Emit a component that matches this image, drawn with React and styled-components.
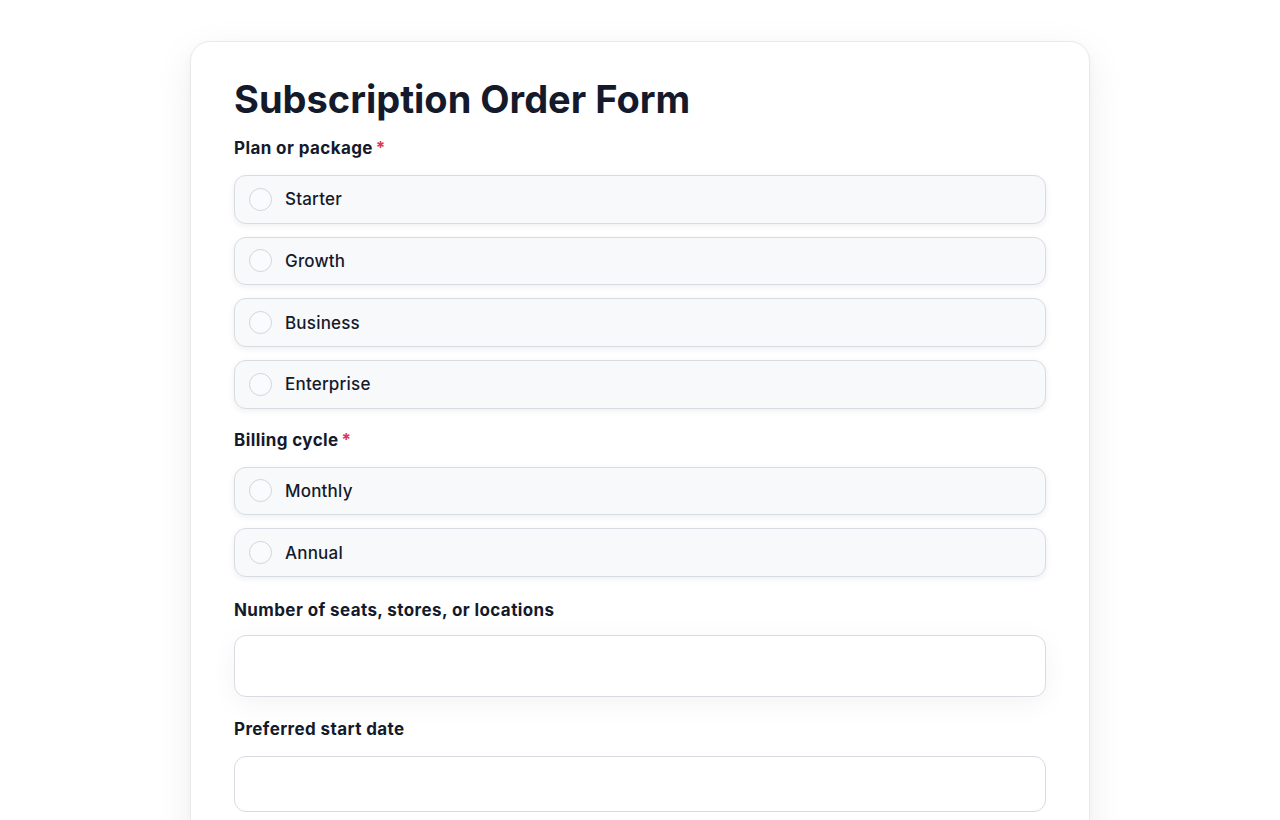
import React from "react";
import styled, { createGlobalStyle } from "styled-components";

const Global = createGlobalStyle`
  * { box-sizing: border-box; }
  html, body { margin: 0; padding: 0; background: #ffffff; }
  body { font-family: Inter, "Noto Sans", "Liberation Sans", sans-serif; color: #141a2b; }
`;

const Page = styled.div`
  display: flex;
  justify-content: center;
  padding-top: 41px;
  min-height: 820px;
`;

const Card = styled.div`
  width: 900px;
  background: #fff;
  border: 1px solid #e8e9ed;
  border-radius: 20px;
  box-shadow: 0 12px 40px rgba(15, 23, 42, 0.07), 0 2px 6px rgba(15, 23, 42, 0.03);
  padding: 35px 43px 60px;
  display: flex;
  flex-direction: column;
`;

const Title = styled.h1`
  margin: 0 0 14px;
  font-size: 38px;
  line-height: 45px;
  font-weight: 700;
  letter-spacing: 0;
  color: #141a2b;
`;

const Field = styled.div`
  display: flex;
  flex-direction: column;
  margin-bottom: ${p => p.$mb || 19}px;
`;

const Label = styled.div`
  font-size: 17px;
  line-height: 24px;
  font-weight: 650;
  letter-spacing: 0.4px;
  color: #141a2b;
  margin-bottom: ${p => p.$mb || 15}px;
`;

const Req = styled.span`
  color: #e0364f;
  margin-left: 3px;
`;

const Options = styled.div`
  display: flex;
  flex-direction: column;
  gap: 12.8px;
`;

const Option = styled.label`
  height: 48.8px;
  display: flex;
  align-items: center;
  gap: 13px;
  padding: 0 14px;
  background: #f8f9fb;
  border: 1px solid #d9dbe2;
  border-radius: 12px;
  box-shadow: 0 2px 6px rgba(15, 23, 42, 0.07);
  font-size: 17px;
  font-weight: 450;
  letter-spacing: 0.2px;
  color: #141a2b;
  cursor: pointer;
`;

const Radio = styled.input.attrs({ type: "radio" })`
  appearance: none;
  margin: 0;
  width: 23px;
  height: 23px;
  border-radius: 50%;
  border: 1px solid #d2d5dc;
  background: #fafbfc;
  flex: none;
`;

const TextInput = styled.input`
  height: ${p => p.$h}px;
  width: 100%;
  border: 1px solid #d9dbe2;
  border-radius: 12px;
  background: #fff;
  font: inherit;
  font-size: 17px;
  padding: 0 16px;
  outline: none;
  box-shadow: ${p => (p.$glow ? "0 6px 28px rgba(15, 23, 42, 0.05)" : "none")};
`;

const plans = ["Starter", "Growth", "Business", "Enterprise"];
const cycles = ["Monthly", "Annual"];

export default function App() {
  return (
    <>
      <Global />
      <Page>
        <Card>
          <Title>Subscription Order Form</Title>
          <Field $mb={19}>
            <Label>
              Plan or package<Req>*</Req>
            </Label>
            <Options>
              {plans.map(p => (
                <Option key={p}>
                  <Radio name="plan" />
                  {p}
                </Option>
              ))}
            </Options>
          </Field>
          <Field $mb={21}>
            <Label>
              Billing cycle<Req>*</Req>
            </Label>
            <Options>
              {cycles.map(c => (
                <Option key={c}>
                  <Radio name="cycle" />
                  {c}
                </Option>
              ))}
            </Options>
          </Field>
          <Field $mb={20}>
            <Label $mb={13}>Number of seats, stores, or locations</Label>
            <TextInput type="text" $h={62} $glow />
          </Field>
          <Field>
            <Label $mb={15}>Preferred start date</Label>
            <TextInput type="text" $h={56} />
          </Field>
        </Card>
      </Page>
    </>
  );
}
